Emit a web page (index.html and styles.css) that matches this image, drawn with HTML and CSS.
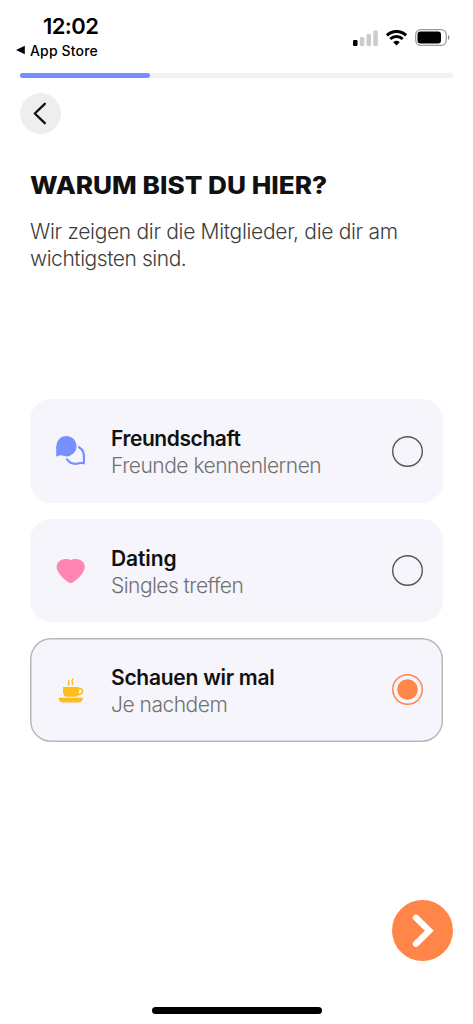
FILE: index.html
```html
<!DOCTYPE html>
<html lang="de">
<head>
<meta charset="utf-8">
<meta name="viewport" content="width=device-width, initial-scale=1">
<title>Warum bist du hier?</title>
<link rel="stylesheet" href="styles.css">
</head>
<body>
<div class="screen">
  <header class="status">
    <div class="status-left">
      <div class="clock"><span>12:02</span></div>
      <div class="return-app">
        <svg width="9" height="10" viewBox="0 0 9 10"><path d="M0 5 8.8.7v8.6z"/></svg>
        <span>App Store</span>
      </div>
    </div>
    <div class="status-icons">
      <svg width="25" height="16" viewBox="0 0 25 16"><rect y="10" width="4.5" height="6" rx="1.2"/><g fill="#ccccce"><rect x="6.8" y="7" width="4.5" height="9" rx="1.2"/><rect x="13.5" y="4" width="4.5" height="12" rx="1.2"/><rect x="20.3" y=".5" width="4.5" height="15.5" rx="1.2"/></g></svg>
      <svg width="21" height="16" viewBox="0 0 21 16"><g fill="none" stroke="#000" stroke-width="3"><path d="M.9 5.4a13.600 13.600 0 0 1 19.200 0"/><path d="M4.300 9a8.800 8.800 0 0 1 12.400 0"/></g><path d="M10.500 15.500 7.200 12.200a5 5 0 0 1 6.600 0z"/></svg>
      <svg width="35" height="17" viewBox="0 0 35 17"><rect x=".7" y=".7" width="30.6" height="15.6" rx="5" fill="#fff" stroke="#999" stroke-width="1.2"/><rect x="2.5" y="2.5" width="23.5" height="12" rx="3"/><path d="M33 6v5c1.8-.8 1.8-4.2 0-5z" fill="#888"/></svg>
    </div>
  </header>
  <div class="progress"><div class="progress-fill"></div></div>
  <button class="back" aria-label="Zurück"><svg width="41" height="41" viewBox="0 0 41 41"><path d="M24.800 10.800 14.800 20.500l10 9.700" fill="none" stroke="#111" stroke-width="2.300" stroke-linecap="round" stroke-linejoin="round"/></svg></button>
  <main class="content">
    <h1 class="title"><span class="title-text">WARUM BIST DU HIER?</span></h1>
    <p class="lead"><span class="lead-first">Wir zeigen dir die Mitglieder, die dir am</span><br><span class="lead-second">wichtigsten sind.</span></p>
    <div class="options">
      <div class="option">
        <svg class="option-icon" width="30" height="30" viewBox="0 0 30 30"><path d="M1.200 19.700V10.600A10.200 10.200 0 1 1 11.400 20.400C7.800 20 5.500 18.200 2.700 20.300c-.7.500-1.500.2-1.500-.6z" fill="#7890ff"/><path d="M24 11.200C28.300 13.500 29.600 17.300 28.900 27.300c-2-.5-3.200-.5-5 0-4.800 1.300-9-.1-11.900-3.900" fill="none" stroke="#7890ff" stroke-width="2.200" stroke-linecap="round" stroke-linejoin="round"/></svg>
        <div class="option-text"><div class="name"><span class="name-friends">Freundschaft</span></div><div class="detail"><span class="detail-friends">Freunde kennenlernen</span></div></div>
        <span class="radio"></span>
      </div>
      <div class="option">
        <svg class="option-icon" width="30" height="30" viewBox="0 0 30 30"><path d="M15.700 4C18.500 2.700 22.700 2.800 25.700 4.200c3.800 2 5.200 6.500 3.200 10.400-2.300 5-7.200 9.800-12 12.100q-1.200.6-2.400 0C9.700 24.400 4.900 19.600 2.500 14.600.500 10.700 2 6.200 5.700 4.200 8.700 2.800 12.900 2.700 15.700 4z" fill="#ff85b2"/></svg>
        <div class="option-text"><div class="name"><span class="name-dating">Dating</span></div><div class="detail"><span class="detail-dating">Singles treffen</span></div></div>
        <span class="radio"></span>
      </div>
      <div class="option selected">
        <svg class="option-icon" width="30" height="30" viewBox="0 0 30 30"><g fill="#ffbc20"><path d="M8 12h16v5c0 3.200-1.500 4.700-4.200 4.700h-7.600C9.500 21.700 8 20.200 8 17z"/><path d="M3.500 22.700h24.500c-.1 3.300-2 4.700-5.300 4.700H8.800C5.500 27.400 3.600 26 3.500 22.700z"/></g><g fill="none" stroke="#ffbc20" stroke-linecap="round"><path d="M23.500 13.700h2.300c2.800.3 2.500 5.900-2.900 5.800" stroke-width="1.600"/><path d="M14 5.700c-1.800 1.600.7 2.400-.5 4.400M17.700 4c-2.100 2.200.9 3-.5 5.600" stroke-width="1.500"/></g></svg>
        <div class="option-text"><div class="name"><span class="name-open">Schauen wir mal</span></div><div class="detail"><span class="detail-open">Je nachdem</span></div></div>
        <span class="radio"></span>
      </div>
    </div>
  </main>
  <footer class="footer">
    <button class="next" aria-label="Weiter"><svg width="61" height="61" viewBox="0 0 61 61"><path d="m24 17.800 13.300 13-13.300 13" fill="none" stroke="#fff" stroke-width="6.200" stroke-linecap="round" stroke-linejoin="miter"/></svg></button>
    <div class="home-bar"></div>
  </footer>
</div>
</body>
</html>
```
FILE: styles.css
```css
* { box-sizing: border-box; }
body { margin: 0; background: #fff; font-family: Inter, "Liberation Sans", sans-serif; color: #000; }
svg { display: block; flex: none; }
button { display: block; border: 0; padding: 0; border-radius: 50%; }
.screen { width: 473px; height: 1024px; display: flex; flex-direction: column; overflow: hidden; white-space: nowrap; }
.status { height: 73px; flex: none; display: flex; justify-content: space-between; padding: 0 23px 0 16px; }
.clock { margin: 13px 0 0 27px; font-size: 22px; line-height: 26px; font-weight: 600; letter-spacing: -.6px; }
.return-app { display: flex; align-items: center; gap: 5px; height: 22px; font-size: 14px; font-weight: 500; letter-spacing: .15px; }
.status-icons { display: flex; align-items: center; gap: 8px; height: 17px; margin-top: 29px; }
.progress { flex: none; height: 5px; margin: 0 20px; border-radius: 3px; background: #f2f1f5; }
.progress-fill { width: 130px; height: 5px; border-radius: 3px; background: #7890ff; }
.back { flex: none; width: 41px; height: 41px; margin: 15px 0 0 20px; background: #eee; }
.content { flex: none; padding: 0 30px; }
.title { margin: 37px 0 0; font-size: 24px; line-height: 30px; font-weight: 800; color: #111; }
.title-text { display: inline-block; transform: scaleX(1.09); transform-origin: left; }
.lead { margin: 17px 0 0; font-size: 21px; line-height: 27px; font-weight: 300; color: #3c3c3c; }
.lead-first { letter-spacing: -.31px; }
.lead-second { letter-spacing: -.45px; }
.options { display: flex; flex-direction: column; gap: 15.5px; margin-top: 127.4px; }
.option { display: flex; align-items: center; height: 103.8px; padding: 0 20px 0 25px; border-radius: 21px; background: #f6f5fb; }
.selected { box-shadow: inset 0 0 0 1.5px #b8b8bc; }
.option-text { flex: 1; margin: 2.4px 0 0 26px; }
.name { font-size: 21px; line-height: 27px; font-weight: 600; color: #111; }
.name-friends { letter-spacing: -.42px; }
.name-dating { letter-spacing: -.1px; }
.name-open { letter-spacing: -.26px; }
.detail { font-size: 21px; line-height: 27px; font-weight: 300; color: #707070; }
.detail-friends { letter-spacing: -.5px; }
.detail-dating { letter-spacing: -.55px; }
.detail-open { letter-spacing: -.48px; }
.radio { flex: none; width: 31px; height: 31px; border-radius: 50%; box-shadow: inset 0 0 0 1.4px #555; }
.selected .radio { box-shadow: inset 0 0 0 1.5px #ff8548; background: radial-gradient(circle, #ff8548 9.8px, transparent 10.5px); }
.footer { flex: none; margin-top: auto; padding: 0 20px 10.3px; }
.next { width: 61px; height: 61px; margin: 0 0 46px auto; background: #ff8548; }
.home-bar { width: 170px; height: 6.4px; margin: 0 auto; border-radius: 4px; background: #000; }
```
